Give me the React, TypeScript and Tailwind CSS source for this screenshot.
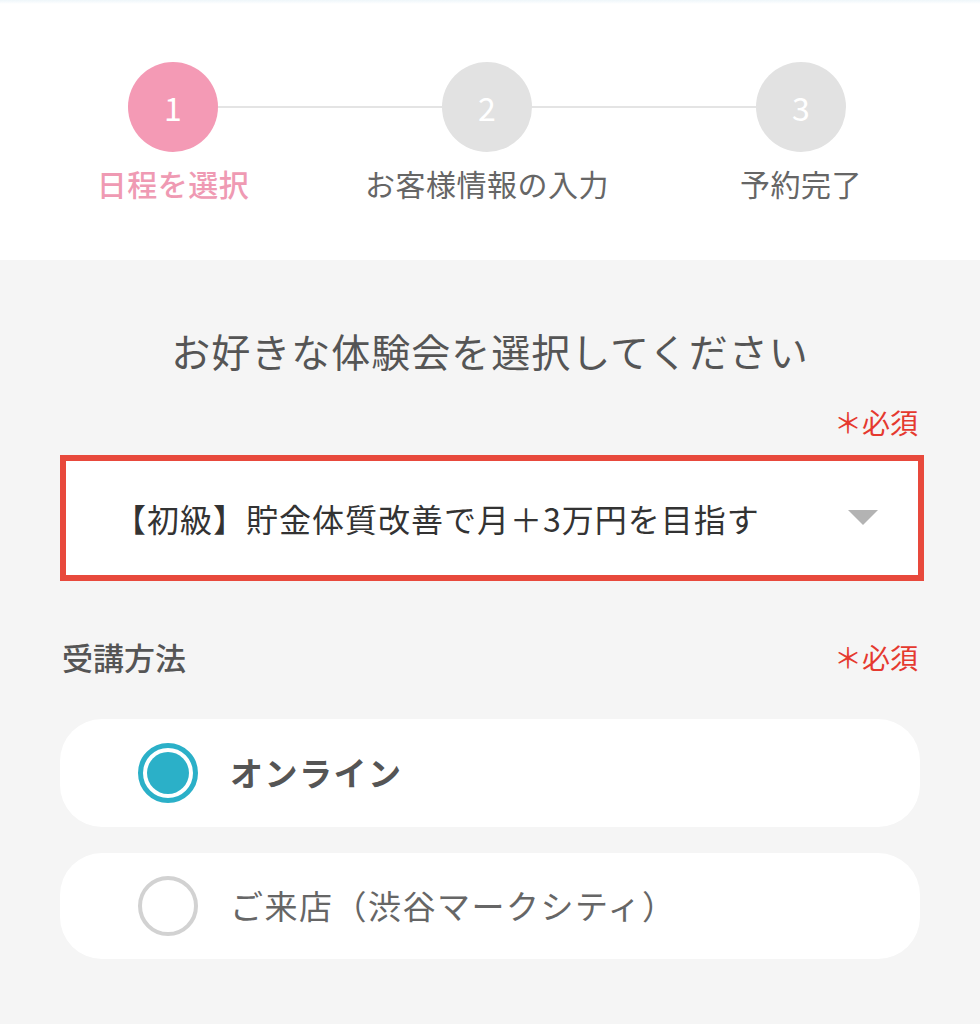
import React from "react";

const font = { fontFamily: '"Noto Sans CJK JP", "Noto Sans", sans-serif' };

function Step({ n, label, active }: { n: string; label: string; active?: boolean }) {
  return (
    <div className="flex flex-col items-center">
      <div
        className={`relative z-10 w-[90px] h-[90px] rounded-full flex items-center justify-center text-white text-[32px] font-normal ${
          active ? "bg-[#f49ab5]" : "bg-[#e2e2e2]"
        }`}
      >
        {n}
      </div>
      <div
        className={`mt-[11px] text-[30px] leading-[40px] tracking-[0.5px] ${
          active ? "text-[#ef9ab3] font-medium" : "text-[#666666]"
        }`}
      >
        {label}
      </div>
    </div>
  );
}

export default function App() {
  return (
    <div className="w-[980px] min-h-[1024px] bg-[#f5f5f5]" style={font}>
      <div className="h-[4px] bg-gradient-to-b from-[#eef6fa] to-white" />
      <div className="bg-white h-[256px] pt-[58px]">
        <div className="relative ml-[16px] w-[942px] grid grid-cols-3">
          <div className="absolute left-[200px] right-[180px] top-[44px] h-[2px] bg-[#e4e4e4]" />
          <Step n="1" label="日程を選択" active />
          <Step n="2" label="お客様情報の入力" />
          <Step n="3" label="予約完了" />
        </div>
      </div>
      <div className="px-[60px]">
        <div className="pt-[64px] text-center text-[39px] leading-[52px] text-[#555555] tracking-[1px]">
          お好きな体験会を選択してください
        </div>
        <div className="mt-[28px] flex justify-end pr-[2px] text-[28px] leading-[36px] text-[#e5392f]">
          ＊必須
        </div>
        <div className="mt-[15px] mr-[-4px] h-[126px] border-[6px] border-[#e8493c] bg-white flex items-center pl-[48px] pr-[40px]">
          <span className="flex-1 text-[32px] text-[#333333] tracking-[1px]">
            【初級】貯金体質改善で月＋3万円を目指す
          </span>
          <svg width="30" height="16" viewBox="0 0 30 16">
            <polygon points="0,0 30,0 15,15" fill="#b3b3b3" />
          </svg>
        </div>
        <div className="mt-[53px] flex items-center justify-between">
          <span className="ml-[2px] text-[31px] font-medium text-[#555555]">受講方法</span>
          <span className="pr-[2px] text-[28px] text-[#e5392f]">＊必須</span>
        </div>
        <div className="mt-[38px] flex flex-col gap-[26px]">
          <div className="h-[108px] rounded-[42px] bg-white flex items-center pl-[78px]">
            <div className="w-[60px] h-[60px] rounded-full border-[5px] border-[#2bb0c8] p-[4px]">
              <div className="w-full h-full rounded-full bg-[#2bb0c8]" />
            </div>
            <span className="ml-[32px] text-[33px] font-bold text-[#555555] tracking-[1.5px]">オンライン</span>
          </div>
          <div className="h-[106px] rounded-[42px] bg-white flex items-center pl-[78px]">
            <div className="w-[60px] h-[60px] rounded-full border-[4px] border-[#d2d2d2]" />
            <span className="ml-[32px] text-[33px] text-[#666666] tracking-[1.5px]">ご来店（渋谷マークシティ）</span>
          </div>
        </div>
      </div>
    </div>
  );
}
